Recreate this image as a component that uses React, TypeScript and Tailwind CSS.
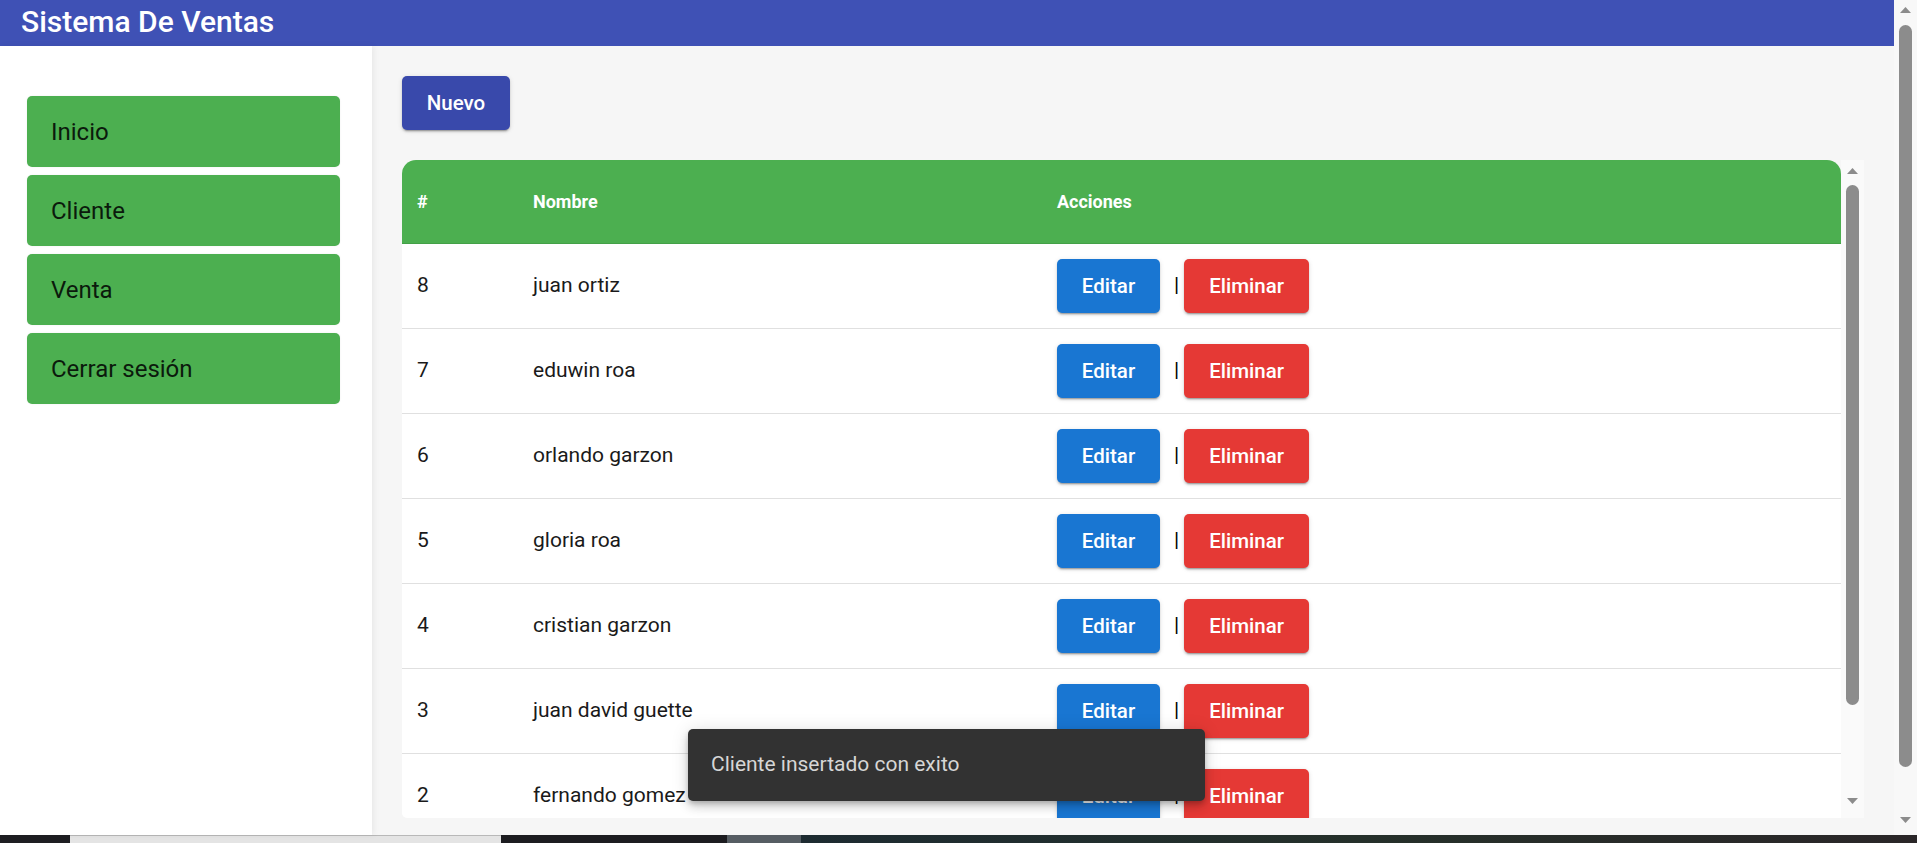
import React from "react";

const rows = [
  { id: 8, name: "juan ortiz" },
  { id: 7, name: "eduwin roa" },
  { id: 6, name: "orlando garzon" },
  { id: 5, name: "gloria roa" },
  { id: 4, name: "cristian garzon" },
  { id: 3, name: "juan david guette" },
  { id: 2, name: "fernando gomez" },
];

const btnShadow =
  "shadow-[0_3px_1px_-2px_rgba(0,0,0,0.2),0_2px_2px_0_rgba(0,0,0,0.14),0_1px_5px_0_rgba(0,0,0,0.12)]";

function ArrowUp() {
  return (
    <svg width="11" height="6" viewBox="0 0 11 6" className="block">
      <polygon points="0,6 11,6 5.5,0" fill="#8c8c8c" />
    </svg>
  );
}
function ArrowDown() {
  return (
    <svg width="11" height="6" viewBox="0 0 11 6" className="block">
      <polygon points="0,0 11,0 5.5,6" fill="#8c8c8c" />
    </svg>
  );
}

export default function App() {
  return (
    <div className="relative w-[1917px] h-[843px] overflow-hidden flex flex-col font-['Roboto','Noto_Sans',sans-serif] bg-[#f6f6f6]">
      <div className="flex h-[835px]">
        <div className="flex-1 flex flex-col min-w-0">
          <header className="h-[46px] bg-[#3f51b5] pl-[21px] flex items-center shrink-0">
            <h1 className="text-[30px] font-medium text-white leading-none -mt-[2px]">
              Sistema De Ventas
            </h1>
          </header>
          <div className="flex flex-1 min-h-0">
            <aside className="w-[372px] shrink-0 bg-white pt-[50px] pl-[27px] z-10 shadow-[2px_0_6px_rgba(0,0,0,0.06)]">
              <nav className="w-[313px] flex flex-col gap-[8px]">
                {["Inicio", "Cliente", "Venta", "Cerrar sesión"].map((t) => (
                  <div
                    key={t}
                    className="h-[71px] rounded-[5px] bg-[#4caf50] pl-[24px] flex items-center text-[24px] text-[#0b1a0c] shadow-[0_0_2px_rgba(0,0,0,0.08)]"
                  >
                    {t}
                  </div>
                ))}
              </nav>
            </aside>
            <main className="flex-1 min-w-0 bg-[#f6f6f6] px-[30px] pt-[30px]">
              <button
                className={`w-[108px] h-[54px] rounded-[5px] bg-[#3949ab] text-white text-[20.5px] font-medium ${btnShadow}`}
              >
                Nuevo
              </button>
              <div className="mt-[30px] h-[658px] flex">
                <div className="flex-1 min-w-0 bg-white rounded-t-[14px] rounded-bl-[5px] overflow-hidden">
                  <div className="h-[84px] bg-[#4caf50] border-b border-[#43a047] flex items-center text-white font-bold text-[18px]">
                    <div className="w-[116px] pl-[15px]">#</div>
                    <div className="w-[524px] pl-[15px]">Nombre</div>
                    <div className="flex-1 pl-[15px]">Acciones</div>
                  </div>
                  {rows.map((r) => (
                    <div
                      key={r.id}
                      className="h-[85px] flex items-center border-b border-[#e0e0e0] text-[21px] text-[#1a1a1a]"
                    >
                      <div className="w-[116px] pl-[15px]">{r.id}</div>
                      <div className="w-[524px] pl-[15px]">{r.name}</div>
                      <div className="flex-1 pl-[15px] flex items-center">
                        <button
                          className={`w-[103px] h-[54px] rounded-[5px] bg-[#1976d2] text-white text-[20.5px] font-medium ${btnShadow}`}
                        >
                          Editar
                        </button>
                        <span className="ml-[14px] mr-[5px] text-[21px] text-black">|</span>
                        <button
                          className={`w-[125px] h-[54px] rounded-[5px] bg-[#e53935] text-white text-[20.5px] font-medium ${btnShadow}`}
                        >
                          Eliminar
                        </button>
                      </div>
                    </div>
                  ))}
                </div>
                <div className="w-[23px] shrink-0 bg-[#fafafa] flex flex-col items-center pt-[8px]">
                  <ArrowUp />
                  <div className="mt-[11px] w-[13px] h-[520px] rounded-full bg-[#8c8c8c]" />
                  <div className="mt-[93px]">
                    <ArrowDown />
                  </div>
                </div>
              </div>
            </main>
          </div>
        </div>
        <div className="w-[23px] shrink-0 bg-[#f8f8f8] flex flex-col items-center pt-[7px]">
          <ArrowUp />
          <div className="mt-[12px] w-[13px] h-[742px] rounded-full bg-[#8c8c8c]" />
          <div className="mt-[50px]">
            <ArrowDown />
          </div>
        </div>
      </div>
      <div className="h-[8px] flex shrink-0">
        <div className="w-[70px] bg-[#1e1e22]" />
        <div className="w-[431px] bg-[#e4e4e4] border-t border-[#b8b8b8]" />
        <div className="w-[226px] bg-[#1c1c20]" />
        <div className="w-[74px] bg-[#565d63]" />
        <div className="flex-1 bg-gradient-to-r from-[#1d2b31] via-[#25302a] to-[#2a2628]" />
      </div>
      <div className="absolute left-[688px] top-[729px] w-[517px] h-[72px] rounded-[5px] bg-[#323232] pl-[23px] flex items-center text-[21px] text-[#d6d6d6] shadow-[0_3px_5px_-1px_rgba(0,0,0,0.2),0_6px_10px_0_rgba(0,0,0,0.14),0_1px_18px_0_rgba(0,0,0,0.12)]">
        Cliente insertado con exito
      </div>
    </div>
  );
}
